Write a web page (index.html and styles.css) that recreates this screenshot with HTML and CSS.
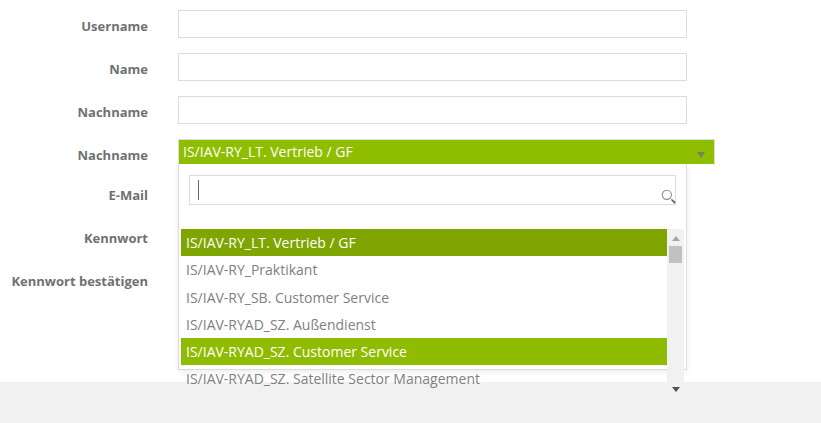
FILE: index.html
```html
<!DOCTYPE html>
<html lang="de">
<head>
<meta charset="utf-8">
<title>Formular</title>
<link rel="stylesheet" href="styles.css">
</head>
<body>
<main class="form">
  <div class="row"><label class="label">Username</label><input class="field" type="text"></div>
  <div class="row"><label class="label">Name</label><input class="field" type="text"></div>
  <div class="row"><label class="label">Nachname</label><input class="field" type="text"></div>
  <div class="row">
    <label class="label">Nachname</label>
    <div class="select">
      <div class="select-value">
        <span>IS/IAV-RY_LT. Vertrieb / GF</span>
        <svg class="caret" width="8" height="6" viewBox="0 0 8 6"><path d="M0 0h8L4 6z"/></svg>
      </div>
      <div class="panel">
        <div class="search">
          <span class="cursor"></span>
          <svg class="lens" width="16" height="15" viewBox="0 0 16 15" fill="none"><circle cx="5.8" cy="5.8" r="4.6" stroke="#8a8a8a" stroke-width="1.1"/><path d="M9.4 9.4l1.6 1.6" stroke="#8a8a8a"/><path d="M10.8 10.8l3.4 3.2" stroke="#666" stroke-width="1.8"/></svg>
        </div>
        <div class="list-wrap">
          <ul class="list">
            <li class="item selected">IS/IAV-RY_LT. Vertrieb / GF</li>
            <li class="item">IS/IAV-RY_Praktikant</li>
            <li class="item">IS/IAV-RY_SB. Customer Service</li>
            <li class="item">IS/IAV-RYAD_SZ. Außendienst</li>
            <li class="item active">IS/IAV-RYAD_SZ. Customer Service</li>
            <li class="item">IS/IAV-RYAD_SZ. Satellite Sector Management</li>
          </ul>
          <div class="scrollbar">
            <svg class="arrow-up" width="8" height="5" viewBox="0 0 8 5"><path d="M4 0l4 5H0z"/></svg>
            <div class="thumb"></div>
            <svg class="arrow-down" width="8" height="5" viewBox="0 0 8 5"><path d="M0 0h8L4 5z"/></svg>
          </div>
        </div>
      </div>
    </div>
  </div>
  <div class="row row-email"><label class="label">E-Mail</label><input class="field" type="text"></div>
  <div class="row"><label class="label">Kennwort</label><input class="field" type="password"></div>
  <div class="row"><label class="label">Kennwort bestätigen</label><input class="field" type="password"></div>
</main>
<footer class="footer"></footer>
</body>
</html>
```
FILE: styles.css
```css
* { box-sizing: border-box; }
html, body { margin: 0; height: 100%; overflow: hidden; background: #fff; }
body { display: flex; flex-direction: column; font-family: "Open Sans", sans-serif; }
.form { height: 382px; padding-top: 10px; display: flex; flex-direction: column; gap: 15px; }
.row { display: flex; gap: 30px; height: 28px; }
.row-email { margin-top: -3px; }
.label { width: 148px; text-align: right; font-size: 13px; font-weight: 700; line-height: 18px; padding-top: 7px; color: #6f7173; white-space: nowrap; }
.field { width: 509px; height: 28px; border: 1px solid #dcdcdc; background: #fff; padding: 0 6px; margin: 0; outline: 0; }
.select { position: relative; width: 537px; height: 26px; border: 1px solid #dedede; border-bottom: 0; }
.select-value { height: 24px; background: #8fbe00; color: #fff; font-size: 14px; line-height: 24px; padding: 0 9px 0 4px; display: flex; justify-content: space-between; align-items: center; }
.caret { fill: #7b7f68; margin-top: 6px; }
.panel { position: absolute; z-index: 2; left: -1px; top: 24px; width: 509px; height: 206px; background: #fff; border: 1px solid #dcdcdc; border-top: 0; box-shadow: 0 2px 6px rgba(0,0,0,.08); padding: 11px 2px 0; }
.search { position: relative; height: 30px; margin: 0 8px 24px; border: 1px solid #dcdcdc; }
.cursor { position: absolute; left: 8px; top: 4px; width: 1px; height: 20px; background: #666; }
.lens { position: absolute; right: -2px; bottom: 0; }
.list-wrap { display: flex; height: 170px; width: 503px; }
.list { flex: 1; margin: 0; padding: 0; list-style: none; overflow: hidden; }
.item { height: 27.25px; line-height: 27px; padding-left: 5px; font-size: 14px; color: #808080; white-space: nowrap; }
.selected { background: #7fa500; color: #fff; }
.active { background: #8fbc00; color: #fff; }
.scrollbar { position: relative; width: 17px; background: #f1f1f1; flex: none; }
.thumb { position: absolute; left: 2px; top: 17px; width: 13px; height: 17px; background: #c1c1c1; }
.arrow-up { position: absolute; left: 5px; top: 7px; fill: #a3a3a3; }
.arrow-down { position: absolute; left: 5px; bottom: 7px; fill: #505050; }
.footer { flex: 1; background: #f1f1f1; }
```
